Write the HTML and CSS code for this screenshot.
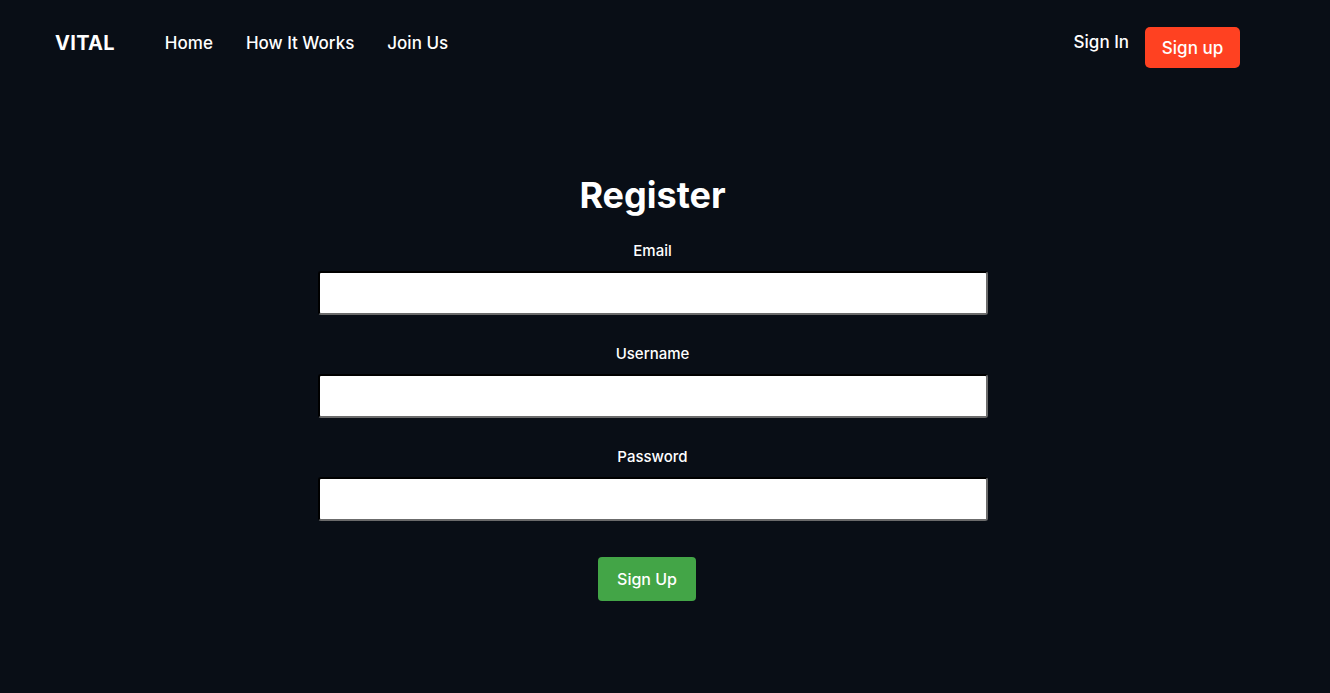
FILE: index.html
```html
<!DOCTYPE html>
<html lang="en">
<head>
<meta charset="utf-8">
<title>VITAL - Register</title>
<link rel="stylesheet" href="styles.css">
</head>
<body>
<header class="nav">
  <div class="nav-left">
    <a class="brand" href="#">VITAL</a>
    <nav class="links">
      <a href="#">Home</a>
      <a href="#">How It Works</a>
      <a href="#">Join Us</a>
    </nav>
  </div>
  <div class="nav-right">
    <a class="signin" href="#">Sign In</a>
    <a class="signup" href="#">Sign up</a>
  </div>
</header>
<main class="main">
  <form class="form">
    <h1 class="title">Register</h1>
    <label class="label" for="email">Email</label>
    <input class="input" id="email" type="email">
    <label class="label" for="username">Username</label>
    <input class="input" id="username" type="text">
    <label class="label" for="password">Password</label>
    <input class="input" id="password" type="password">
    <button class="submit" type="button">Sign Up</button>
  </form>
</main>
</body>
</html>
```

FILE: styles.css
```css
* { box-sizing: border-box; }
html, body { margin: 0; padding: 0; }
body {
  background: #090e16;
  color: #ffffff;
  font-family: Inter, "Noto Sans", sans-serif;
  min-height: 693px;
}
a { color: #fff; text-decoration: none; }

.nav {
  display: flex;
  justify-content: space-between;
  align-items: center;
  padding: 27px 90px 0 55px;
  height: 68px;
}
.nav-left { display: flex; align-items: center; }
.brand {
  font-size: 20px;
  font-weight: 700;
  letter-spacing: 0.3px;
  margin-right: 50px;
  margin-top: -10px;
}
.links { display: flex; gap: 33px; margin-top: -10px; }
.links a { font-size: 17px; font-weight: 500; }
.nav-right { display: flex; align-items: center; gap: 16px; }
.signin { font-size: 17px; font-weight: 500; margin-top: -12px; }
.signup {
  background: #ff4121;
  border-radius: 5px;
  font-size: 17px;
  font-weight: 500;
  height: 41px;
  width: 95px;
  display: flex;
  align-items: center;
  justify-content: center;
}

.main {
  display: flex;
  justify-content: center;
  padding-right: 25px;
  padding-top: 104px;
}
.form {
  width: 670px;
  display: flex;
  flex-direction: column;
  align-items: center;
}
.title {
  margin: 0 0 24px;
  font-size: 36px;
  font-weight: 700;
  line-height: 46px;
}
.label {
  font-size: 15px;
  font-weight: 500;
  line-height: 18px;
  margin-bottom: 11px;
}
.input {
  width: 100%;
  height: 44px;
  background: #fff;
  border: 2px inset #767676;
  border-top-color: #262626;
  border-left-color: #262626;
  border-bottom-color: #6b6b6b;
  border-right-color: #6b6b6b;
  border-radius: 3px;
  margin-bottom: 30px;
}
.submit {
  margin-top: 6px;
  margin-right: 11px;
  width: 98px;
  height: 44px;
  background: #43a547;
  border: none;
  border-radius: 4px;
  color: #fff;
  font-family: Inter, "Noto Sans", sans-serif;
  font-size: 16px;
  font-weight: 500;
}
```
